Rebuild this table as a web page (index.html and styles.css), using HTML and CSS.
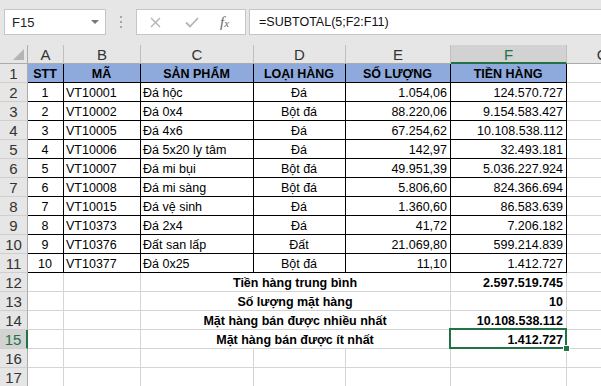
FILE: index.html
```html
<!DOCTYPE html>
<html>

<head>
    <meta name="viewport" content="width=device-width, initial-scale=1">
    <title>Bang tinh</title>
    <link rel="stylesheet" href="styles.css">
</head>

<body>
    <div class="app">
        <div class="fbar">
            <div class="namebox">
                <span>F15</span>
                <span class="arrow"></span>
            </div>
            <div class="dots"><i></i><i></i><i></i></div>
            <div class="btns">
                <svg class="ico-x" width="11" height="11" viewBox="0 0 11 11">
                    <path d="M1 1 L10 10 M10 1 L1 10" stroke="#b4b4b4" stroke-width="1.4" fill="none"/>
                </svg>
                <svg class="ico-ok" width="14" height="11" viewBox="0 0 14 11">
                    <path d="M1 5.5 L5 9.5 L13 1" stroke="#b4b4b4" stroke-width="1.8" fill="none"/>
                </svg>
                <span class="fx">f<small>x</small></span>
            </div>
            <div class="formula">=SUBTOTAL(5;F2:F11)</div>
        </div>

        <div class="sheet">
            <!-- column headers -->
            <div class="corner"><span class="tri"></span></div>
            <div class="ch">A</div>
            <div class="ch">B</div>
            <div class="ch">C</div>
            <div class="ch">D</div>
            <div class="ch">E</div>
            <div class="ch sel">F</div>
            <div class="ch">G</div>

            <!-- row 1 -->
            <div class="rh">1</div>
            <div class="c t hd">STT</div>
            <div class="c t hd">MÃ</div>
            <div class="c t hd">SẢN PHẨM</div>
            <div class="c t hd">LOẠI HÀNG</div>
            <div class="c t hd">SỐ LƯỢNG</div>
            <div class="c t hd">TIỀN HÀNG</div>
            <div class="c"></div>

            <div class="rh">2</div>
            <div class="c t ctr">1</div>
            <div class="c t">VT10001</div>
            <div class="c t">Đá hộc</div>
            <div class="c t ctr">Đá</div>
            <div class="c t rt">1.054,06</div>
            <div class="c t rt">124.570.727</div>
            <div class="c"></div>

            <div class="rh">3</div>
            <div class="c t ctr">2</div>
            <div class="c t">VT10002</div>
            <div class="c t">Đá 0x4</div>
            <div class="c t ctr">Bột đá</div>
            <div class="c t rt">88.220,06</div>
            <div class="c t rt">9.154.583.427</div>
            <div class="c"></div>

            <div class="rh">4</div>
            <div class="c t ctr">3</div>
            <div class="c t">VT10005</div>
            <div class="c t">Đá 4x6</div>
            <div class="c t ctr">Đá</div>
            <div class="c t rt">67.254,62</div>
            <div class="c t rt">10.108.538.112</div>
            <div class="c"></div>

            <div class="rh">5</div>
            <div class="c t ctr">4</div>
            <div class="c t">VT10006</div>
            <div class="c t">Đá 5x20 ly tâm</div>
            <div class="c t ctr">Đá</div>
            <div class="c t rt">142,97</div>
            <div class="c t rt">32.493.181</div>
            <div class="c"></div>

            <div class="rh">6</div>
            <div class="c t ctr">5</div>
            <div class="c t">VT10007</div>
            <div class="c t">Đá mi bụi</div>
            <div class="c t ctr">Bột đá</div>
            <div class="c t rt">49.951,39</div>
            <div class="c t rt">5.036.227.924</div>
            <div class="c"></div>

            <div class="rh">7</div>
            <div class="c t ctr">6</div>
            <div class="c t">VT10008</div>
            <div class="c t">Đá mi sàng</div>
            <div class="c t ctr">Bột đá</div>
            <div class="c t rt">5.806,60</div>
            <div class="c t rt">824.366.694</div>
            <div class="c"></div>

            <div class="rh">8</div>
            <div class="c t ctr">7</div>
            <div class="c t">VT10015</div>
            <div class="c t">Đá vệ sinh</div>
            <div class="c t ctr">Đá</div>
            <div class="c t rt">1.360,60</div>
            <div class="c t rt">86.583.639</div>
            <div class="c"></div>

            <div class="rh">9</div>
            <div class="c t ctr">8</div>
            <div class="c t">VT10373</div>
            <div class="c t">Đá 2x4</div>
            <div class="c t ctr">Đá</div>
            <div class="c t rt">41,72</div>
            <div class="c t rt">7.206.182</div>
            <div class="c"></div>

            <div class="rh">10</div>
            <div class="c t ctr">9</div>
            <div class="c t">VT10376</div>
            <div class="c t">Đất san lấp</div>
            <div class="c t ctr">Đất</div>
            <div class="c t rt">21.069,80</div>
            <div class="c t rt">599.214.839</div>
            <div class="c"></div>

            <div class="rh">11</div>
            <div class="c t ctr">10</div>
            <div class="c t">VT10377</div>
            <div class="c t">Đá 0x25</div>
            <div class="c t ctr">Bột đá</div>
            <div class="c t rt">11,10</div>
            <div class="c t rt">1.412.727</div>
            <div class="c"></div>

            <!-- summary -->
            <div class="rh">12</div>
            <div class="c"></div>
            <div class="c"></div>
            <div class="c m b ctr">Tiền hàng trung bình</div>
            <div class="c b rt">2.597.519.745</div>
            <div class="c"></div>

            <div class="rh">13</div>
            <div class="c"></div>
            <div class="c"></div>
            <div class="c m b ctr">Số lượng mặt hàng</div>
            <div class="c b rt">10</div>
            <div class="c"></div>

            <div class="rh">14</div>
            <div class="c"></div>
            <div class="c"></div>
            <div class="c m b ctr">Mặt hàng bán được nhiều nhất</div>
            <div class="c b rt">10.108.538.112</div>
            <div class="c"></div>

            <div class="rh sel">15</div>
            <div class="c"></div>
            <div class="c"></div>
            <div class="c m b ctr">Mặt hàng bán được ít nhất</div>
            <div class="c b rt active">1.412.727</div>
            <div class="c"></div>

            <div class="rh">16</div>
            <div class="c"></div>
            <div class="c"></div>
            <div class="c"></div>
            <div class="c"></div>
            <div class="c"></div>
            <div class="c"></div>
            <div class="c"></div>

            <div class="rh">17</div>
            <div class="c"></div>
            <div class="c"></div>
            <div class="c"></div>
            <div class="c"></div>
            <div class="c"></div>
            <div class="c"></div>
            <div class="c"></div>
        </div>
    </div>
</body>

</html>
```

FILE: styles.css
```css
body {
    margin: 0;
    padding: 0;
    font-family: "Liberation Sans", Arial, sans-serif;
    background-color: #fff;
    overflow: hidden;
}

.app {
    width: 601px;
    height: 386px;
    overflow: hidden;
}

/* formula bar */
.fbar {
    height: 45px;
    box-sizing: border-box;
    padding-top: 9px;
    background-color: #e6e6e6;
    display: flex;
    align-items: flex-start;
}

.namebox {
    margin-left: 4px;
    width: 102px;
    height: 26px;
    box-sizing: border-box;
    border: 1px solid #c6c6c6;
    background-color: #fff;
    display: flex;
    align-items: center;
    justify-content: space-between;
    padding: 0 6px 0 7px;
    font-size: 13px;
    color: #222;
}

.arrow {
    width: 0;
    height: 0;
    border-left: 4px solid transparent;
    border-right: 4px solid transparent;
    border-top: 4px solid #777;
}

.dots {
    width: 30px;
    height: 26px;
    display: flex;
    flex-direction: column;
    align-items: center;
    justify-content: center;
    gap: 3px;
}

.dots i {
    width: 2px;
    height: 2px;
    background-color: #a6a6a6;
}

.btns {
    width: 110px;
    height: 26px;
    box-sizing: border-box;
    border: 1px solid #c6c6c6;
    background-color: #fff;
    display: flex;
    align-items: center;
    padding-left: 13px;
}

.ico-x {
    margin-right: 24px;
}

.ico-ok {
    margin-right: 21px;
}

.fx {
    font-family: "Liberation Serif", "Times New Roman", serif;
    font-style: italic;
    font-size: 15px;
    color: #666;
}

.fx small {
    font-size: 11px;
}

.formula {
    margin-left: 3px;
    flex: 1;
    height: 26px;
    box-sizing: border-box;
    border: 1px solid #c6c6c6;
    border-right: none;
    background-color: #fff;
    padding-left: 9px;
    font-size: 12.5px;
    line-height: 24px;
    color: #111;
}

/* sheet grid */
.sheet {
    display: grid;
    grid-template-columns: 28px 36px 77px 113px 92px 105px 116px 72px;
    grid-auto-rows: 19px;
    width: 639px;
}

.corner,
.ch,
.rh {
    background-color: #e6e6e6;
    color: #333;
    font-size: 15px;
    box-sizing: border-box;
    display: flex;
    align-items: center;
    justify-content: center;
}

.corner {
    border-right: 1px solid #ababab;
    border-bottom: 1px solid #ababab;
    position: relative;
}

.tri {
    position: absolute;
    right: 3px;
    bottom: 3px;
    width: 0;
    height: 0;
    border-left: 11px solid transparent;
    border-bottom: 11px solid #b4b4b4;
}

.ch {
    border-right: 1px solid #bfbfbf;
    border-bottom: 1px solid #ababab;
    padding-top: 1px;
}

.rh {
    border-right: 1px solid #ababab;
    border-bottom: 1px solid #cfcfcf;
    padding-top: 1px;
}

.ch.sel {
    background-color: #d2d2d2;
    color: #217346;
    border-bottom: 2px solid #217346;
}

.rh.sel {
    background-color: #d2d2d2;
    color: #217346;
    border-right: 2px solid #217346;
}

.c {
    box-sizing: border-box;
    border-right: 1px solid #d4d4d4;
    border-bottom: 1px solid #d4d4d4;
    font-size: 12.5px;
    line-height: 14px;
    color: #000;
    padding: 0 3px 1px 2px;
    display: flex;
    align-items: flex-end;
    white-space: nowrap;
    overflow: hidden;
}

.c.t {
    border-right-color: #000;
    border-bottom-color: #000;
}

.hd {
    background-color: #8ea9db;
    font-weight: bold;
    justify-content: center;
}

.ctr {
    justify-content: center;
}

.rt {
    justify-content: flex-end;
}

.b {
    font-weight: bold;
}

.m {
    grid-column: span 3;
}

.active {
    position: relative;
    overflow: visible;
}

.active::after {
    content: "";
    position: absolute;
    top: -2px;
    left: -2px;
    right: -1px;
    bottom: -1px;
    border: 2px solid #217346;
}

.active::before {
    content: "";
    position: absolute;
    right: -4px;
    bottom: -4px;
    width: 5px;
    height: 5px;
    background-color: #217346;
    border: 1px solid #fff;
    z-index: 2;
}
```
